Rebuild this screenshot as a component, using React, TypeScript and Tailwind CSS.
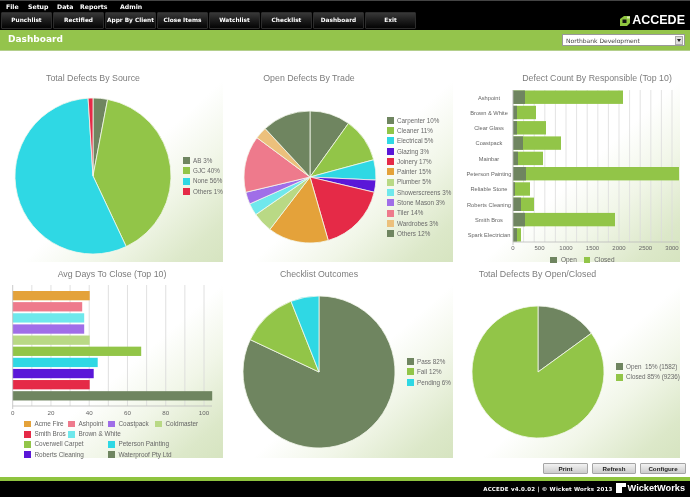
const sans = "font-['Liberation_Sans',Arial,sans-serif]";

const C = {
  olive: "#6f8560",
  green: "#92c548",
  cyan: "#2fd8e4",
  violet: "#5a17d8",
  red: "#e52a47",
  orange: "#e4a23a",
  lime: "#b9d985",
  sky: "#6fe8ec",
  purple: "#a06ee8",
  pink: "#ee7a8c",
  sand: "#ecc07c",
};

type Slice = { label: string; pct: number; color: string };

function Pie({ slices, r }: { slices: Slice[]; r: number }) {
  const size = r * 2 + 2;
  const c = size / 2;
  const total = slices.reduce((s, x) => s + x.pct, 0);
  let acc = 0;
  return (
    <svg width={size} height={size} className="shrink-0">
      {slices.map((s) => {
        const a0 = (acc / total) * Math.PI * 2;
        acc += s.pct;
        const a1 = (acc / total) * Math.PI * 2;
        const large = a1 - a0 > Math.PI ? 1 : 0;
        const d = `M${c} ${c}L${c + r * Math.sin(a0)} ${c - r * Math.cos(a0)}A${r} ${r} 0 ${large} 1 ${c + r * Math.sin(a1)} ${c - r * Math.cos(a1)}Z`;
        return <path key={s.label} d={d} fill={s.color} stroke="#f4f7ec" strokeWidth="0.8" strokeLinejoin="round" />;
      })}
    </svg>
  );
}

function Legend({ items }: { items: { label: string; color: string }[] }) {
  return (
    <div className="flex flex-col">
      {items.map((s) => (
        <div key={s.label} className="flex items-center gap-[3px] h-[10.3px] text-[6.3px] text-[#6a6a6a] whitespace-pre">
          <span className="w-[7px] h-[7px] shrink-0" style={{ background: s.color }} />
          {s.label}
        </div>
      ))}
    </div>
  );
}

const cardBg = "bg-[linear-gradient(to_bottom_right,#ffffff_55%,#f1f6e8_72%,#dce8c9_90%,#d6e4c0_100%)]";
const titleCls = "text-[8.8px] leading-[12px] text-center text-[#7c7c7c] whitespace-nowrap";

const source: Slice[] = [
  { label: "AB 3%", pct: 3, color: C.olive },
  { label: "GJC 40%", pct: 40, color: C.green },
  { label: "None 56%", pct: 56, color: C.cyan },
  { label: "Others 1%", pct: 1, color: C.red },
];
const trade: Slice[] = [
  { label: "Carpenter 10%", pct: 10, color: C.olive },
  { label: "Cleaner 11%", pct: 11, color: C.green },
  { label: "Electrical 5%", pct: 5, color: C.cyan },
  { label: "Glazing 3%", pct: 3, color: C.violet },
  { label: "Joinery 17%", pct: 17, color: C.red },
  { label: "Painter 15%", pct: 15, color: C.orange },
  { label: "Plumber 5%", pct: 5, color: C.lime },
  { label: "Showerscreens 3%", pct: 3, color: C.sky },
  { label: "Stone Mason 3%", pct: 3, color: C.purple },
  { label: "Tiler 14%", pct: 14, color: C.pink },
  { label: "Wardrobes 3%", pct: 3, color: C.sand },
  { label: "Others 12%", pct: 12, color: C.olive },
];
const outcomes: Slice[] = [
  { label: "Pass 82%", pct: 82, color: C.olive },
  { label: "Fail 12%", pct: 12, color: C.green },
  { label: "Pending 6%", pct: 6, color: C.cyan },
];
const openClosed: Slice[] = [
  { label: "Open  15% (1582)", pct: 15, color: C.olive },
  { label: "Closed 85% (9236)", pct: 85, color: C.green },
];

// widths in px measured off the plot
const responsible = [
  ["Ashpoint", 12, 110],
  ["Brown & White", 4, 23],
  ["Clear Glass", 4, 33],
  ["Coastpack", 10, 48],
  ["Mainbar", 5, 30],
  ["Peterson Painting", 13, 166],
  ["Reliable Stone", 2, 17],
  ["Roberts Cleaning", 8, 21],
  ["Smith Bros", 12, 102],
  ["Spark Electrician", 4, 8],
] as const;

function ResponsibleChart() {
  const x0 = 53;
  const ticks = Array.from({ length: 16 }, (_, i) => i);
  return (
    <svg width="220" height="166" className={`block ${sans}`}>
      {ticks.map((i) => (
        <line key={i} x1={x0 + i * 10.6} x2={x0 + i * 10.6} y1="0" y2="152" stroke="#dcdcdc" strokeWidth="0.8" />
      ))}
      {responsible.map(([name, open, all], i) => {
        const y = 0.5 + i * 15.3;
        return (
          <g key={name}>
            <text x="29" y={y + 9} textAnchor="middle" fontSize="5.7" fill="#666">{name}</text>
            <rect x={x0} y={y} width={all} height="13.4" fill={C.green} />
            <rect x={x0} y={y} width={open} height="13.4" fill={C.olive} />
          </g>
        );
      })}
      <line x1={x0} x2={x0} y1="0" y2="155" stroke="#bbb" strokeWidth="0.8" />
      <line x1={x0} x2="219" y1="152" y2="152" stroke="#bbb" strokeWidth="0.8" />
      {["0", "500", "1000", "1500", "2000", "2500", "3000"].map((t, i) => (
        <text key={t} x={x0 + i * 26.5} y="159.5" textAnchor="middle" fontSize="6" fill="#666">{t}</text>
      ))}
    </svg>
  );
}

const days = [
  [C.orange, 77], [C.pink, 69.5], [C.sky, 71.5], [C.purple, 71.5], [C.lime, 77],
  [C.green, 128.5], [C.cyan, 85], [C.violet, 81], [C.red, 77], [C.olive, 199.5],
] as const;

function DaysChart() {
  const x0 = 12.7;
  const step = 19.13;
  return (
    <svg width="223" height="133" className={`block ${sans}`}>
      {Array.from({ length: 10 }, (_, i) => i + 1).map((i) => (
        <line key={i} x1={x0 + i * step} x2={x0 + i * step} y1="0" y2="121" stroke="#d8d8d8" strokeWidth="0.8" />
      ))}
      {days.map(([color, w], i) => (
        <rect key={i} x={x0} y={6 + i * 11.13} width={w} height="9.3" fill={color} />
      ))}
      <line x1={x0} x2={x0} y1="0" y2="124" stroke="#bbb" strokeWidth="0.8" />
      <line x1={x0} x2="212" y1="121" y2="121" stroke="#bbb" strokeWidth="0.8" />
      {[0, 20, 40, 60, 80, 100].map((t, i) => (
        <text key={t} x={x0 + i * 2 * step} y="130" textAnchor="middle" fontSize="6.2" fill="#666">{t}</text>
      ))}
    </svg>
  );
}

function Swatch({ color, label, className }: { color: string; label: string; className?: string }) {
  return (
    <div className={`flex items-center gap-[4px] whitespace-nowrap ${className ?? ""}`}>
      <span className="w-[6.5px] h-[6.5px] shrink-0" style={{ background: color }} />
      {label}
    </div>
  );
}

function NavButton({ label }: { label: string }) {
  return (
    <button className="w-[51px] h-[17px] rounded-[1px] border border-[#2c2c2c] bg-gradient-to-b from-[#383838] to-[#050505] text-white text-[5.8px] font-bold font-['DejaVu_Sans',sans-serif]">
      {label}
    </button>
  );
}

function GrayButton({ label, className }: { label: string; className: string }) {
  return (
    <button className={`h-[11px] rounded-[1px] border border-[#a5a5a5] bg-gradient-to-b from-[#f2f2f2] to-[#cccccc] text-[#222] text-[6.2px] font-bold ${className}`}>
      {label}
    </button>
  );
}

export default function App() {
  return (
    <div className={`w-[690px] h-[497px] overflow-hidden flex flex-col bg-white blur-[0.3px] ${sans}`}>
      {/* top bar */}
      <header className="h-[30px] bg-black border-t border-[#444] relative shrink-0">
        <nav className="flex h-[11px] items-center pl-[6px] text-white text-[6.2px] font-bold font-['DejaVu_Sans',sans-serif]">
          <span className="w-[22px]">File</span>
          <span className="w-[29px]">Setup</span>
          <span className="w-[23px]">Data</span>
          <span className="w-[40px]">Reports</span>
          <span>Admin</span>
        </nav>
        <div className="flex gap-px pl-px">
          {["Punchlist", "Rectified", "Appr By Client", "Close Items", "Watchlist", "Checklist", "Dashboard", "Exit"].map((b) => (
            <NavButton key={b} label={b} />
          ))}
        </div>
        <div className="absolute right-[5px] top-[13px] flex items-center gap-[1px]">
          <svg width="12" height="11" viewBox="0 0 12 11">
            <path d="M1 4 5 1h6v7l-3 3H1z" fill="#8fc43f" />
            <path d="M3.5 4.5h4v3.5h-4z" fill="#111" />
            <path d="M8 1.5h3v2H8z" fill="#d5e8b0" />
          </svg>
          <span className="text-white font-bold text-[12.5px] leading-none">ACCEDE</span>
        </div>
      </header>

      {/* title bar */}
      <div className="h-[21px] shrink-0 bg-[#94c44c] border-b border-[#b4cf8c] flex items-center justify-between pl-[8px] pr-[5px]">
        <span className="text-white font-bold text-[9px] font-['DejaVu_Sans',sans-serif]">Dashboard</span>
        <div className="w-[123px] h-[12px] bg-white border border-[#999] flex items-center justify-between pl-[3px] pr-px text-[6px] text-[#444] font-['DejaVu_Sans',sans-serif]">
          Northbank Development
          <span className="w-[8px] h-[9px] bg-[#ddd] border border-[#aaa] flex items-center justify-center">
            <span className="border-x-[2px] border-t-[3px] border-x-transparent border-t-[#222]" />
          </span>
        </div>
      </div>

      {/* charts */}
      <main className="flex-1 grid grid-cols-[223px_223px_220px] grid-rows-[202px_193px] gap-x-[7px] gap-y-[3px] pt-[9px]">
        <section className={`${cardBg} pt-[12px]`}>
          <div className={`${titleCls} w-[186px]`}>Total Defects By Source</div>
          <div className="flex items-center gap-[11px] pl-[14px] mt-[13px]">
            <Pie slices={source} r={78} />
            <Legend items={source} />
          </div>
        </section>
        <section className={`${cardBg} pt-[12px]`}>
          <div className={`${titleCls} w-[158px]`}>Open Defects By Trade</div>
          <div className="flex items-center gap-[10px] pl-[13px] mt-[26px]">
            <Pie slices={trade} r={66} />
            <Legend items={trade} />
          </div>
        </section>
        <section className={`${cardBg} pt-[12px]`}>
          <div className={`${titleCls} pl-[62px] pr-[8px]`}>Defect Count By Responsible (Top 10)</div>
          <div className="mt-[6px]">
            <ResponsibleChart />
          </div>
          <div className="flex justify-center gap-[7px] pl-[25px] text-[6.5px] text-[#666] -mt-[1px]">
            <Swatch color={C.olive} label="Open" />
            <Swatch color={C.green} label="Closed" />
          </div>
        </section>

        <section className={`${cardBg} pt-[3px]`}>
          <div className={`${titleCls} w-[224px]`}>Avg Days To Close (Top 10)</div>
          <div className="mt-[5px]">
            <DaysChart />
          </div>
          <div className="grid grid-cols-[44px_40px_47px_auto] pl-[24px] pt-[1px] text-[6.4px] leading-[10.2px] text-[#666]">
            <Swatch color={C.orange} label="Acme Fire" />
            <Swatch color={C.pink} label="Ashpoint" />
            <Swatch color={C.purple} label="Coastpack" />
            <Swatch color={C.lime} label="Coldmaster" />
            <Swatch color={C.red} label="Smith Bros" />
            <Swatch color={C.sky} label="Brown & White" className="col-span-3" />
            <Swatch color={C.green} label="Coverwell Carpet" className="col-span-2" />
            <Swatch color={C.cyan} label="Peterson Painting" className="col-span-2" />
            <Swatch color={C.violet} label="Roberts Cleaning" className="col-span-2" />
            <Swatch color={C.olive} label="Waterproof Pty Ltd" className="col-span-2" />
          </div>
        </section>
        <section className={`${cardBg} pt-[3px]`}>
          <div className={`${titleCls} w-[178px]`}>Checklist Outcomes</div>
          <div className="flex items-center gap-[11px] pl-[12px] mt-[15px]">
            <Pie slices={outcomes} r={76} />
            <Legend items={outcomes} />
          </div>
        </section>
        <section className={`${cardBg} pt-[3px]`}>
          <div className={`${titleCls} w-[155px]`}>Total Defects By Open/Closed</div>
          <div className="flex items-center gap-[11px] pl-[11px] mt-[25px]">
            <Pie slices={openClosed} r={66} />
            <Legend items={openClosed} />
          </div>
        </section>
      </main>

      {/* actions */}
      <div className="flex justify-end gap-[4px] pr-[4px] pt-[2px] h-[19px] shrink-0 items-center">
        <GrayButton label="Print" className="w-[45px]" />
        <GrayButton label="Refresh" className="w-[44px]" />
        <GrayButton label="Configure" className="w-[46px]" />
      </div>

      {/* footer */}
      <footer className="h-[20px] shrink-0 bg-black border-t-[4px] border-[#8fc43f] flex items-center justify-end pr-[5px] text-white">
        <span className="text-[5.5px] font-bold tracking-[0.2px] font-['DejaVu_Sans',sans-serif]">ACCEDE v4.0.02 | © Wicket Works 2013</span>
        <svg width="10" height="10" viewBox="0 0 10 10" className="ml-[3px] mb-[3px]">
          <path d="M0 0h10v4H6v6H0z" fill="#fff" />
        </svg>
        <span className="text-[9.2px] font-bold leading-none ml-[2px]">WicketWorks</span>
      </footer>
    </div>
  );
}
